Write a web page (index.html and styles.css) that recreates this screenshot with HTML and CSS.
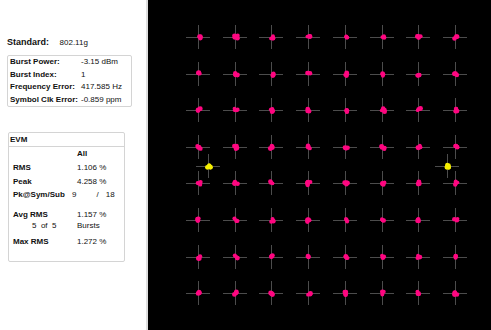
FILE: index.html
```html
<!DOCTYPE html>
<html lang="en">
<head>
    <meta charset="UTF-8">
    <title>WLAN Constellation</title>
    <link rel="stylesheet" href="styles.css">
</head>
<body>
    <div class="panel">
        <div class="standard">
            <span class="lbl">Standard:</span>
            <span class="val">802.11g</span>
        </div>

        <div class="info-box">
            <div class="info-row"><span class="lbl">Burst Power:</span><span>-3.15 dBm</span></div>
            <div class="info-row"><span class="lbl">Burst Index:</span><span>1</span></div>
            <div class="info-row"><span class="lbl">Frequency Error:</span><span>417.585 Hz</span></div>
            <div class="info-row"><span class="lbl">Symbol Clk Error:</span><span>-0.859 ppm</span></div>
        </div>

        <div class="evm-box">
            <div class="evm-title">EVM</div>
            <div class="evm-row head"><span></span><span class="lbl">All</span></div>
            <div class="evm-row r-rms"><span class="lbl">RMS</span><span>1.106 %</span></div>
            <div class="evm-row r-peak"><span class="lbl">Peak</span><span>4.258 %</span></div>
            <div class="evm-row r-pk"><span class="lbl">Pk@Sym/Sub</span><span class="pk"><span>9</span><span class="slash">/</span><span>18</span></span></div>
            <div class="evm-row r-avg"><span class="lbl">Avg RMS</span><span>1.157 %</span></div>
            <div class="evm-row r-bursts"><span class="count">5&nbsp;&nbsp;of&nbsp;&nbsp;5</span><span>Bursts</span></div>
            <div class="evm-row r-max"><span class="lbl">Max RMS</span><span>1.272 %</span></div>
        </div>
    </div>

    <div class="plot">
        <svg id="constellation" width="343" height="330" viewBox="0 0 343 330"></svg>
    </div>

    <script>
        // 64QAM 星座图
        const NS = 'http://www.w3.org/2000/svg';
        const svg = document.getElementById('constellation');

        let seed = 7;
        function rnd() {
            seed = (seed * 1103515245 + 12345) % 2147483648;
            return seed / 2147483648;
        }

        function add(tag, attrs) {
            const el = document.createElementNS(NS, tag);
            for (const k in attrs) el.setAttribute(k, attrs[k]);
            svg.appendChild(el);
            return el;
        }

        function cross(cx, cy) {
            add('line', { x1: cx - 12, y1: cy + 0.5, x2: cx + 12, y2: cy + 0.5, class: 'axis' });
            add('line', { x1: cx + 0.5, y1: cy - 12, x2: cx + 0.5, y2: cy + 12, class: 'axis' });
        }

        function blob(cx, cy, cls, n) {
            for (let k = 0; k < n; k++) {
                const dx = (rnd() - 0.35) * 3.4;
                const dy = (rnd() - 0.6) * 3.4;
                add('circle', { cx: cx + dx, cy: cy + dy, r: 1.8 + rnd() * 0.7, class: cls });
            }
        }

        const points = [];
        for (let j = 0; j < 8; j++) {
            for (let i = 0; i < 8; i++) {
                const x = Math.round(50 + 36.7 * i);
                const y = Math.round(37 + 36.6 * j);
                cross(x, y);
                points.push([x, y]);
            }
        }
        // 导频
        cross(60, 166);
        cross(299, 166);

        points.forEach(p => blob(p[0] + 0.5, p[1] + 0.5, 'sym', 4));
        blob(60.5, 166.5, 'pilot', 6);
        blob(299.5, 166.5, 'pilot', 6);
    </script>
</body>
</html>
```

FILE: styles.css
```css
* {
    box-sizing: border-box;
    margin: 0;
    padding: 0;
}

body {
    font-family: 'Liberation Sans', Arial, sans-serif;
    font-size: 8px;
    color: #111;
    background: #fff;
    display: flex;
    height: 330px;
    overflow: hidden;
}

.lbl {
    font-weight: bold;
}

.panel {
    width: 148px;
    height: 330px;
    background: #fff;
    border-right: 2px solid #dedede;
    padding-top: 36px;
}

.standard {
    height: 12px;
    line-height: 12px;
    padding-left: 7px;
    font-size: 9px;
}

.standard .val {
    margin-left: 8px;
    font-size: 8px;
}

.info-box {
    margin: 7px 0 0 7px;
    width: 125px;
    border: 1px solid #d4d4d4;
    border-radius: 2px;
    padding: 0 0 0 2px;
}

.info-row {
    display: grid;
    grid-template-columns: 71px 1fr;
    height: 12.5px;
    line-height: 12.5px;
    white-space: nowrap;
}

.evm-box {
    margin: 25px 0 0 8px;
    width: 117px;
    height: 130px;
    border: 1px solid #d4d4d4;
    border-radius: 2px;
}

.evm-title {
    height: 14px;
    line-height: 13px;
    padding-left: 1px;
    font-weight: bold;
    border-bottom: 1px solid #d4d4d4;
}

.evm-row {
    display: grid;
    grid-template-columns: 64px 1fr;
    padding-left: 4px;
    height: 12px;
    line-height: 12px;
    white-space: nowrap;
}

.evm-row.head {
    margin-top: 1px;
}

.r-rms,
.r-peak {
    margin-top: 2px;
}

.r-pk {
    margin-top: 1px;
}

.r-avg {
    margin-top: 8px;
}

.r-bursts {
    margin-top: -1px;
}

.r-max {
    margin-top: 4px;
}

.pk {
    margin-left: -5px;
}

.pk .slash {
    margin: 0 7px 0 20px;
}

.count {
    padding-left: 19px;
}

.plot {
    flex: 1;
    background: #000;
    height: 330px;
}

#constellation {
    display: block;
}

#constellation .axis {
    stroke: #4c4c4c;
    stroke-width: 1;
    shape-rendering: crispEdges;
}

#constellation .sym {
    fill: #ff0680;
}

#constellation .pilot {
    fill: #f6f000;
}
```
